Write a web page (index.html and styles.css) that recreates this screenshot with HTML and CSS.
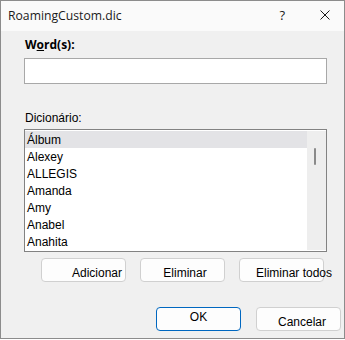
FILE: index.html
```html
<!DOCTYPE html>
<html lang="pt">
<head>
    <meta charset="UTF-8">
    <title>RoamingCustom.dic</title>
    <link rel="stylesheet" href="styles.css">
</head>
<body>
    <div class="dialog">
        <div class="titlebar">
            <span class="title">RoamingCustom.dic</span>
            <span class="help">?</span>
            <svg class="close" width="10" height="10" viewBox="0 0 10 10">
                <path d="M0.5 0.5 L9.5 9.5 M9.5 0.5 L0.5 9.5" stroke="#1a1a1a" stroke-width="1" fill="none"/>
            </svg>
        </div>
        <div class="content">
            <label class="word-label" for="word">W<u>o</u>rd(s):</label>
            <input type="text" id="word" class="word-input">

            <div class="dict-label">Dicionário:</div>
            <div class="listbox">
                <ul class="items">
                    <li class="selected">Álbum</li>
                    <li>Alexey</li>
                    <li>ALLEGIS</li>
                    <li>Amanda</li>
                    <li>Amy</li>
                    <li>Anabel</li>
                    <li>Anahita</li>
                </ul>
                <div class="scrollbar"><div class="thumb"></div></div>
            </div>

            <div class="actions">
                <button class="btn">Adicionar</button>
                <button class="btn">Eliminar</button>
                <button class="btn">Eliminar todos</button>
            </div>
        </div>
        <div class="footer">
            <button class="btn btn-ok">OK</button>
            <button class="btn btn-cancel">Cancelar</button>
        </div>
    </div>
</body>
</html>
```

FILE: styles.css
```css
body {
    margin: 0;
    padding: 0;
    background-color: #fff;
    font-family: "Liberation Sans", Arial, sans-serif;
    font-size: 12px;
    color: #000;
}
.dialog {
    width: 345px;
    height: 339px;
    box-sizing: border-box;
    border: 1px solid #8c8c8c;
    background-color: #f0f0f0;
    display: flex;
    flex-direction: column;
}
.titlebar {
    height: 30px;
    background-color: #fafafa;
    display: flex;
    align-items: center;
    padding-left: 7px;
}
.title {
    font-family: "Open Sans", sans-serif;
    font-size: 12.2px;
    color: #1a1a1a;
    flex: 1;
    padding-bottom: 1px;
}
.help {
    font-family: "Open Sans", sans-serif;
    font-size: 13px;
    color: #1a1a1a;
    margin-right: 35px;
    padding-bottom: 2px;
}
.close {
    margin-right: 14px;
    margin-bottom: 3px;
}
.content {
    padding-left: 23px;
    display: flex;
    flex-direction: column;
}
.word-label {
    font-family: "Open Sans", sans-serif;
    font-weight: bold;
    font-size: 12px;
    line-height: 16px;
    margin-top: 6px;
    padding-left: 1px;
}
.word-input {
    width: 303px;
    height: 26px;
    box-sizing: border-box;
    margin: 5px 0 0;
    border: 1px solid #a8a8a8;
    background-color: #fff;
    outline: none;
}
.dict-label {
    margin-top: 27px;
    line-height: 14px;
    padding-left: 1px;
}
.listbox {
    width: 303px;
    height: 123px;
    box-sizing: border-box;
    margin-top: 4px;
    border: 1px solid #828282;
    background-color: #fff;
    display: flex;
}
.items {
    list-style: none;
    margin: 1px 0 0;
    padding: 0;
    width: 282px;
}
.items li {
    height: 17px;
    line-height: 18px;
    padding-left: 2px;
    font-size: 12px;
}
.items li.selected {
    background-color: #e3e3e6;
}
.scrollbar {
    flex: 1;
    background-color: #eeeeee;
    margin: 1px 0 1px 0;
    position: relative;
}
.thumb {
    position: absolute;
    left: 7px;
    top: 17px;
    width: 2px;
    height: 17px;
    border-radius: 1px;
    background-color: #8a8a8a;
}
.actions {
    display: flex;
    gap: 14px;
    margin-top: 6px;
    padding-left: 17px;
}
.btn {
    width: 85px;
    height: 24px;
    box-sizing: border-box;
    border: 1px solid #d0d0d0;
    border-radius: 4px;
    background-color: #fdfdfd;
    font-family: "Liberation Sans", Arial, sans-serif;
    font-size: 12px;
    color: #000;
    padding: 5px 0 0;
    white-space: nowrap;
    overflow: visible;
    display: flex;
    align-items: center;
    justify-content: flex-end;
}
.actions .btn {
    padding-right: 3px;
}
.actions .btn:nth-child(2) {
    justify-content: center;
    padding-left: 8px;
}
.actions .btn:nth-child(3) {
    justify-content: flex-start;
    padding-left: 16px;
}
.footer {
    margin-top: auto;
    margin-bottom: 7px;
    display: flex;
    justify-content: flex-end;
    gap: 15px;
    padding-right: 3px;
}
.btn-ok {
    border: 1px solid #0067c0;
    justify-content: center;
    padding: 0 0 4px;
}
.btn-cancel {
    justify-content: center;
    padding: 6px 0 0 7px;
}
```
